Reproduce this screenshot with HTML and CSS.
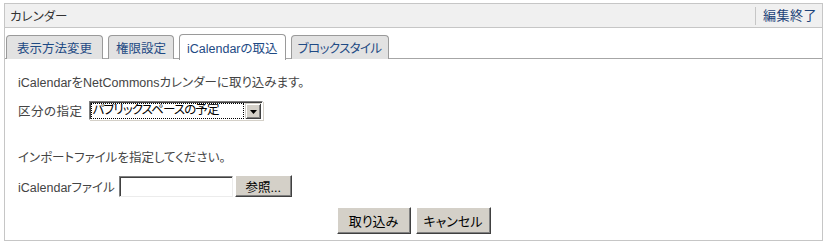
FILE: index.html
```html
<!DOCTYPE html>
<html lang="ja">
<head>
<meta charset="utf-8">
<link rel="stylesheet" href="styles.css">
</head>
<body>
<div class="frame">
  <div class="header">
    <span class="title">カレンダー</span>
    <span class="end">編集終了</span>
  </div>
  <div class="tabs">
    <span class="tab t1">表示方法変更</span>
    <span class="tab t2">権限設定</span>
    <span class="tab t3 active">iCalendarの取込</span>
    <span class="tab t4">ブロックスタイル</span>
  </div>
  <div class="content">
    <p class="line intro">iCalendarをNetCommonsカレンダーに取り込みます。</p>
    <div class="line row">
      <span class="label">区分の指定</span>
      <span class="select"><span class="sel-text">パブリックスペースの予定</span><span class="sel-btn"><svg width="7" height="4" viewBox="0 0 7 4"><path d="M0 0h7L3.5 4z" fill="#000"/></svg></span></span>
    </div>
    <p class="line import">インポートファイルを指定してください。</p>
    <div class="line row">
      <span>iCalendarファイル</span>
      <span class="input"></span>
      <span class="btn browse">参照...</span>
    </div>
    <div class="actions">
      <span class="btn big">取り込み</span>
      <span class="btn big">キャンセル</span>
    </div>
  </div>
</div>
</body>
</html>
```
FILE: styles.css
```css
html, body {
  margin: 0;
  padding: 0;
  background: #fff;
}
body {
  font-family: "Liberation Sans", "Noto Sans CJK JP", sans-serif;
  font-size: 12.5px;
  font-feature-settings: "palt";
  color: #444;
}
.frame {
  margin: 3px 6px 0 4px;
  border: 1px solid #c6c6c6;
  height: 238px;
  box-sizing: border-box;
}
.header {
  height: 23px;
  background: #f0f0f0;
  border-bottom: 1px solid #c6c6c6;
  display: flex;
  align-items: center;
  justify-content: space-between;
  padding: 0 5px 0 5px;
}
.title {
  color: #333;
  font-size: 12.5px;
}
.end {
  color: #1d4379;
  font-size: 13px;
  border-left: 1px solid #c6c6c6;
  padding-left: 7px;
  line-height: 18px;
  letter-spacing: 0.5px;
}
.tabs {
  display: flex;
  gap: 5px;
  padding: 6px 0 0 1px;
  border-bottom: 1px solid #a6a6a6;
  height: 24px;
  box-sizing: content-box;
}
.tab {
  border: 1px solid #9a9a9a;
  border-bottom: none;
  border-radius: 4px 4px 0 0;
  background: #e2e2e2;
  color: #1e4a84;
  font-size: 12.5px;
  padding: 0 8px;
  display: flex;
  align-items: center;
  height: 23px;
  margin-top: 1px;
}
.t1 {
  padding: 0 10px;
}
.t2 {
  padding: 0 7px;
}
.t3 {
  padding: 0 7px;
}
.t4 {
  padding: 0 6px;
  letter-spacing: -0.6px;
}
.tab.active {
  background: #fff;
  height: 25px;
  margin-top: 0;
  margin-bottom: -1px;
}
.content {
  padding: 0 0 0 13px;
}
.line {
  margin: 0;
}
.intro {
  padding-top: 15px;
  line-height: 18px;
}
.row {
  display: flex;
  align-items: center;
  gap: 4px;
}
.label {
  margin-right: 2px;
  letter-spacing: 0.5px;
}
.content > .row:nth-child(2) {
  margin-top: 9px;
}
.select {
  display: inline-flex;
  align-items: stretch;
  width: 174px;
  height: 19px;
  box-sizing: border-box;
  border-top: 1px solid #808080;
  border-left: 1px solid #808080;
  border-right: 1px solid #fff;
  border-bottom: 1px solid #fff;
  box-shadow: inset 1px 1px 0 #404040, 1px 1px 0 #d4d0c8;
  background: #fff;
  padding: 2px 1px 1px 2px;
}
.sel-text {
  flex: 1;
  color: #000;
  font-size: 12.5px;
  letter-spacing: -0.9px;
  line-height: 13px;
  outline: 1px dotted #000;
  padding-left: 1px;
  margin-right: 2px;
  white-space: nowrap;
  overflow: hidden;
}
.sel-btn {
  width: 15px;
  background: #d4d0c8;
  border-top: 1px solid #d4d0c8;
  border-left: 1px solid #d4d0c8;
  box-shadow: inset -1px -1px 0 #404040, inset 1px 1px 0 #fff, inset -2px -2px 0 #808080;
  margin: -1px 0 -1px 0;
  display: flex;
  align-items: center;
  justify-content: center;
}
.import {
  margin-top: 29px;
  line-height: 18px;
}
.content > .row:nth-child(4) {
  margin-top: 8px;
}
.input {
  width: 114px;
  height: 21px;
  box-sizing: border-box;
  border-top: 1px solid #808080;
  border-left: 1px solid #808080;
  border-right: 1px solid #ececec;
  border-bottom: 1px solid #ececec;
  box-shadow: inset 1px 1px 0 #404040;
  background: #fff;
}
.btn {
  display: inline-flex;
  align-items: center;
  justify-content: center;
  background: #d4d0c8;
  color: #000;
  box-sizing: border-box;
  border-top: 1px solid #fff;
  border-left: 1px solid #fff;
  border-right: 1px solid #404040;
  border-bottom: 1px solid #404040;
  box-shadow: inset -1px -1px 0 #808080;
}
.browse {
  width: 57px;
  height: 22px;
  margin-left: -2px;
  font-size: 12.5px;
}
.actions {
  display: flex;
  justify-content: center;
  gap: 5px;
  margin-top: 10px;
  padding-right: 13px;
}
.big {
  width: 74px;
  height: 27px;
  font-size: 13px;
}
.big:last-child {
  width: 75px;
}
```
